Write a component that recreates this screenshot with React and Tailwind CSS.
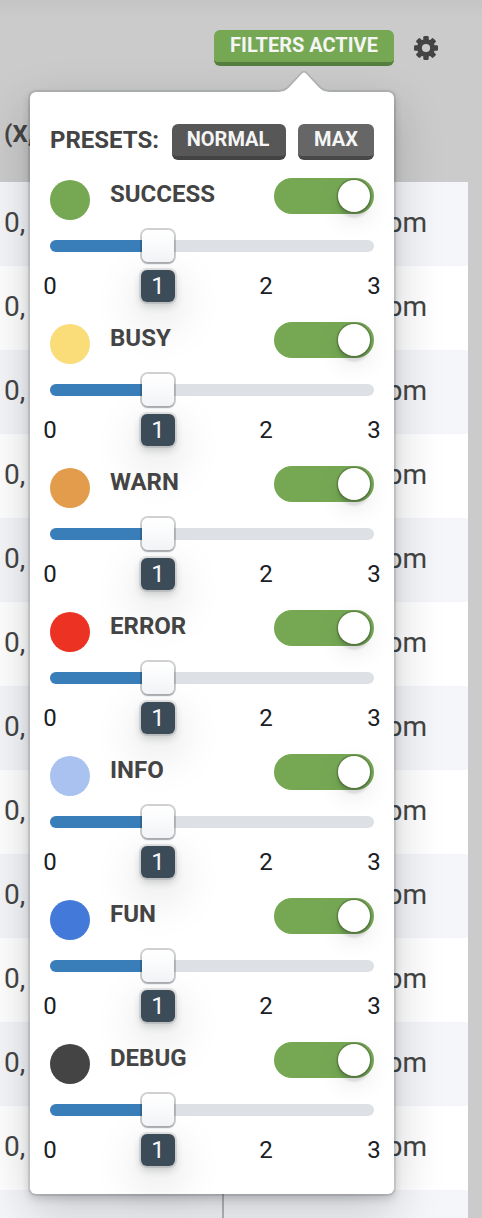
const levels = [
  { name: 'SUCCESS', dot: 'bg-[#76a854]' },
  { name: 'BUSY', dot: 'bg-[#fadc78]' },
  { name: 'WARN', dot: 'bg-[#e29c4b]' },
  { name: 'ERROR', dot: 'bg-[#eb3223]' },
  { name: 'INFO', dot: 'bg-[#a9c2f0]' },
  { name: 'FUN', dot: 'bg-[#4379d9]' },
  { name: 'DEBUG', dot: 'bg-[#444444]' },
];

function Cog() {
  return (
    <svg viewBox="0 0 24 24" className="h-6 w-6">
      <g fill="#444444">
        <rect x="9.3" y="0" width="5.4" height="24" rx="1.2" />
        <rect x="9.3" y="0" width="5.4" height="24" rx="1.2" transform="rotate(45 12 12)" />
        <rect x="9.3" y="0" width="5.4" height="24" rx="1.2" transform="rotate(90 12 12)" />
        <rect x="9.3" y="0" width="5.4" height="24" rx="1.2" transform="rotate(135 12 12)" />
        <circle cx="12" cy="12" r="9" />
      </g>
      <circle cx="12" cy="12" r="4.1" fill="#cbcbcb" />
    </svg>
  );
}

function Level({ name, dot }) {
  return (
    <section className="h-36">
      <div className="flex h-[62px] items-start">
        <span className={`mt-0.5 h-10 w-10 rounded-full ${dot}`} />
        <span className="ml-5 text-[24px] leading-8 font-bold text-[#444444]">{name}</span>
        <span className="ml-auto flex h-9 w-[100px] justify-end rounded-full bg-[#76a854] py-0.5 pr-1">
          <span className="h-8 w-8 rounded-full bg-white shadow-[0_0_0_1.5px_rgba(16,22,26,0.2),0_4px_4px_rgba(16,22,26,0.1),0_6px_2px_rgba(16,22,26,0.05),0_8px_24px_rgba(16,22,26,0.1)]" />
        </span>
      </div>
      <div className="flex h-3 items-center rounded-full bg-[#dde1e5]">
        <span className="h-3 w-[92px] shrink-0 rounded-l-full bg-[#397db9]" />
        <span className="h-8 w-8 shrink-0 rounded-[6px] bg-linear-to-b from-white to-[#f4f6f9] shadow-[0_0_0_2px_rgba(16,22,26,0.2),0_2px_2px_rgba(16,22,26,0.2)]" />
      </div>
      <div className="-mx-4 mt-[18px] grid grid-cols-[32px_76px_32px_76px_32px_76px_32px] text-center text-[24px] leading-8 text-[#182026]">
        <span>0</span>
        <span className="col-start-3 -mx-px h-8 rounded-[6px] bg-[#3b4b58] text-[#f5f8fa] shadow-[0_0_0_2px_rgba(16,22,26,0.1),0_4px_8px_rgba(16,22,26,0.2),0_16px_48px_rgba(16,22,26,0.2)]">1</span>
        <span className="col-start-5">2</span>
        <span className="col-start-7">3</span>
      </div>
    </section>
  );
}

function Popover() {
  return (
    <div className="absolute top-[92px] left-[30px] h-[1102px] w-[364px] rounded-[6px] bg-white px-5 pt-8 shadow-[0_0_0_2px_rgba(16,22,26,0.1),0_4px_8px_rgba(16,22,26,0.2),0_16px_48px_rgba(16,22,26,0.22)]">
      <svg className="absolute -top-[23px] left-[246px] h-6 w-14" viewBox="0 0 56 24">
        <path d="M0 21C6 21 9 20 12 17L25 3.2Q28 .6 31 3.2L44 17C47 20 50 21 56 21V23H0Z" fill="#aeb0b0" />
        <path d="M0 23C7 23 10 21.5 13 18.5L26 4.6Q28 2.6 30 4.6L43 18.5C46 21.5 49 23 56 23V24H0Z" fill="#fff" />
      </svg>
      <div className="flex h-[54px] items-start">
        <span className="w-[122px] text-[24px] leading-8 font-bold whitespace-nowrap text-[#444444]">PRESETS:</span>
        <button className="h-9 w-[114px] rounded-[6px] border-b-4 border-[#434343] bg-[#575757] pr-0.5 pb-0.5 text-[20px] leading-[30px] font-bold text-[#f5f5f5]">NORMAL</button>
        <button className="ml-3 h-9 w-[76px] rounded-[6px] border-b-4 border-[#484848] bg-[#666666] pb-0.5 text-[20px] leading-[30px] font-bold text-[#f5f5f5]">MAX</button>
      </div>
      {levels.map((level) => (
        <Level key={level.name} {...level} />
      ))}
    </div>
  );
}

export default function App() {
  return (
    <div className="relative h-[1218px] w-[482px] overflow-hidden bg-[#cbcbcb] font-['Roboto',sans-serif]">
      <header className="flex h-[92px] items-start justify-end bg-linear-to-b from-[#c4c4c4] to-[#cbcbcb] to-20% pt-[30px] pr-11">
        <button className="h-9 w-[180px] rounded-[6px] border-b-4 border-[#557f3e] bg-[#76a854] pb-0.5 text-[20px] leading-[30px] font-bold text-[#f5f5f5]">FILTERS ACTIVE</button>
        <span className="mt-1.5 ml-5"><Cog /></span>
      </header>
      <div className="flex h-[90px] items-center pb-1.5 pl-1 text-[24px] font-bold text-[#444444]">(X,</div>
      <div className="w-[468px] text-[28px] text-[#444444]">
        {Array.from({ length: 12 }, (_, i) => (
          <div key={i} className="flex h-[84px] items-center justify-between bg-white pr-[41px] pb-[3px] pl-1 odd:bg-[#f5f6f9]">
            <span>0,</span>
            <span>pm</span>
          </div>
        ))}
        <div className="flex h-7 bg-[#f5f6f9]">
          <span className="ml-[222px] w-0.5 bg-[#b5b6b8]" />
        </div>
      </div>
      <Popover />
    </div>
  );
}
